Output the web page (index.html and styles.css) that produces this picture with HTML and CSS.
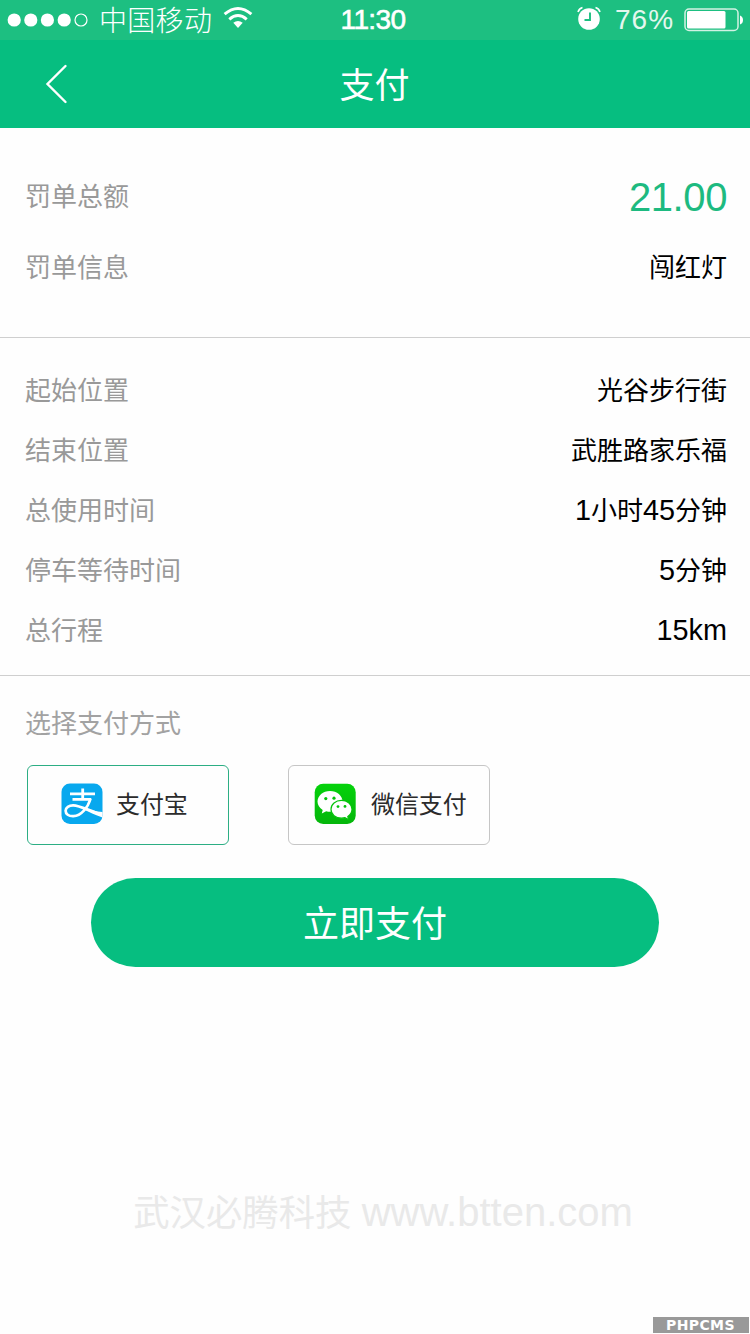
FILE: index.html
```html
<!DOCTYPE html>
<html lang="zh-CN">
<head>
<meta charset="utf-8">
<title>支付</title>
<link rel="stylesheet" href="styles.css">
</head>
<body>
<div class="screen">
  <header class="header">
    <div class="status">
      <div class="status-left">
        <svg class="signal" width="82" height="16" viewBox="0 0 82 16" fill="#fff">
          <circle cx="7.2" cy="8" r="6.6"/><circle cx="23.8" cy="8" r="6.6"/><circle cx="40.4" cy="8" r="6.6"/><circle cx="57.2" cy="8" r="6.6"/>
          <circle cx="74" cy="8" r="6" fill="none" stroke="#fff" stroke-width="1.2"/>
        </svg>
        <span class="carrier">中国移动</span>
        <svg class="wifi" width="30" height="24" viewBox="0 0 30 24" fill="none" stroke="#fff" stroke-width="3">
          <path d="M1.6 8.2Q15 -3.2 28.4 8.2M6.3 13.3Q15 5.8 23.7 13.3"/>
          <path d="M10.3 16.8Q15 13 19.7 16.8L15 21.9Z" fill="#fff" stroke="none"/>
        </svg>
      </div>
      <span class="clock">11:30</span>
      <div class="status-right">
        <svg class="alarm" width="24" height="24" viewBox="0 0 24 24">
          <circle cx="12" cy="13" r="10.8" fill="#fff"/>
          <path d="M1 6Q2 2.5 5.5 1.5M23 6Q22 2.5 18.5 1.5" fill="none" stroke="#fff" stroke-width="1.6"/>
          <path d="M13 6.5V14H7.5" fill="none" stroke="#1dbf81" stroke-width="1.9"/>
        </svg>
        <span class="percent">76%</span>
        <svg class="battery" width="60" height="24" viewBox="0 0 60 24">
          <rect x="1" y="1" width="53" height="21.5" rx="4" fill="none" stroke="#d4f2e4" stroke-width="1.5"/>
          <rect x="3" y="3" width="38.5" height="17.5" rx="1.5" fill="#fff"/>
          <path d="M56 7.5Q59 8.5 59 12T56 16.5Z" fill="#fff"/>
        </svg>
      </div>
    </div>
    <nav class="nav">
      <svg class="back" width="24" height="40" viewBox="0 0 24 40" fill="none" stroke="#fff" stroke-width="2.4" stroke-linecap="round"><path d="M20.5 2L2.5 20L20.5 38"/></svg>
      <h1 class="title">支付</h1>
    </nav>
  </header>

  <section class="section ticket">
    <div class="row"><span class="label">罚单总额</span><span class="amount">21.00</span></div>
    <div class="row"><span class="label">罚单信息</span><span class="value">闯红灯</span></div>
  </section>

  <section class="section trip">
    <div class="row"><span class="label">起始位置</span><span class="value">光谷步行街</span></div>
    <div class="row"><span class="label">结束位置</span><span class="value">武胜路家乐福</span></div>
    <div class="row"><span class="label">总使用时间</span><span class="value"><span class="latin">1</span>小时<span class="latin">45</span>分钟</span></div>
    <div class="row"><span class="label">停车等待时间</span><span class="value"><span class="latin">5</span>分钟</span></div>
    <div class="row"><span class="label">总行程</span><span class="value"><span class="latin">15km</span></span></div>
  </section>

  <section class="payment">
    <h2 class="label heading">选择支付方式</h2>
    <div class="methods">
      <div class="method selected">
        <svg class="logo" width="42" height="42" viewBox="0 0 42 42">
          <rect x=".5" y=".5" width="41" height="40.5" rx="8.5" fill="#08a8ee"/>
          <path d="M9 10.8H34M21.7 5.5V17M11.5 16.4H30" fill="none" stroke="#fff" stroke-width="2.8"/>
          <path d="M29.6 15.5C27 24.5 20 33 12.5 33.2C7.5 33.4 4.6 31 4.6 27.8C4.6 24.5 8 22.2 12.3 22.3C19 22.5 27 27.3 41 31.8" fill="none" stroke="#fff" stroke-width="2.7"/>
          <path d="M23 24.2C29 27 35 28.3 41.5 29V34.5C34 32 28 29 22 26Z" fill="#fff"/>
        </svg>
        <span class="method-name">支付宝</span>
      </div>
      <div class="method wechat">
        <svg class="logo" width="42" height="42" viewBox="0 0 42 42">
          <defs><linearGradient id="green" x1="0" y1="0" x2="0" y2="1"><stop offset="0" stop-color="#04d20b"/><stop offset="1" stop-color="#05b60b"/></linearGradient></defs>
          <rect x=".7" y=".7" width="41" height="40.3" rx="8.5" fill="url(#green)"/>
          <path d="M16 8C9 8 3.5 12.7 3.5 18.5C3.5 22 5.5 25 8.7 27L7.8 30.5L12.2 28.2Q14 28.8 16 28.8C23 28.8 28.5 24.3 28.5 18.5S23 8 16 8Z" fill="#fff"/>
          <path d="M27.5 17.4C21.5 17.4 17 21.3 17 26.3S21.5 35.2 27.5 35.2Q29.3 35.2 31 34.7L34.6 36.7L33.8 33.5C36.5 31.8 38 29.2 38 26.3C38 21.3 33.5 17.4 27.5 17.4Z" fill="#fff" stroke="#05c30b" stroke-width="1.2"/>
          <g fill="#05c30b"><circle cx="11.8" cy="15.6" r="1.6"/><circle cx="20" cy="15.2" r="1.6"/><circle cx="24" cy="23.6" r="1.4"/><circle cx="31" cy="23.4" r="1.4"/></g>
        </svg>
        <span class="method-name">微信支付</span>
      </div>
    </div>
    <button class="submit" type="button">立即支付</button>
  </section>

  <footer class="footer">
    <p class="company">武汉必腾科技 <span class="site">www.btten.com</span></p>
    <span class="badge">PHPCMS</span>
  </footer>
</div>
</body>
</html>
```
FILE: styles.css
```css
* { box-sizing: border-box; }
body { margin: 0; background: #fefefe; font-family: "Liberation Sans", "Noto Sans CJK SC", sans-serif; }
h1, h2, p { margin: 0; font-weight: 400; }
svg { display: block; flex: none; }
.screen { width: 750px; height: 1334px; display: flex; flex-direction: column; overflow: hidden; }

.header { height: 128px; background: #06be80; color: #fff; }
.status { height: 40px; background: #1dbf81; display: grid; grid-template-columns: 1fr auto 1fr; align-items: center; }
.status-left, .status-right { display: flex; align-items: center; height: 40px; }
.status-left { padding-left: 7px; }
.carrier { margin: 0 0 2px 10px; width: 114px; font-size: 28px; line-height: 38px; font-family: "Noto Sans CJK SC", sans-serif; font-weight: 300; letter-spacing: .3px; }
.wifi { margin: 0 0 4px 10px; }
.clock { font-size: 28px; line-height: 40px; letter-spacing: -.6px; padding-right: 4px; -webkit-text-stroke: .6px #fff; }
.status-right { justify-content: flex-end; padding-right: 6px; }
.alarm { margin-bottom: 4px; }
.percent { margin-left: 14px; width: 60px; font-size: 28px; line-height: 40px; letter-spacing: 1px; color: #e4f7ee; }
.battery { margin-left: 9px; }
.nav { height: 88px; padding: 0 45px; display: grid; grid-template-columns: 24px 1fr 24px; align-items: center; }
.title { font-size: 35px; line-height: 50px; text-align: center; padding: 3px 1px 0 0; }

.section { border-bottom: 1px solid #cfcfcf; padding: 0 23px 0 25px; flex: none; }
.row { display: flex; justify-content: space-between; align-items: center; }
.label { font-size: 26px; line-height: 40px; color: #999; }
.value { font-size: 26px; line-height: 40px; color: #000; }
.latin { font-size: 28.8px; line-height: 1; }
.amount { font-size: 40px; line-height: 50px; letter-spacing: -.4px; color: #1dba80; }
.ticket { height: 210px; padding-top: 33px; }
.ticket .row { height: 71px; }
.trip { height: 338px; padding-top: 23px; }
.trip .row { height: 60px; }

.payment { height: 291px; padding: 28px 27px 0; display: flex; flex-direction: column; flex: none; }
.heading { margin-left: -2px; color: #a2a2a2; }
.methods { display: flex; gap: 59px; margin-top: 21px; }
.method { width: 202px; height: 80px; display: flex; align-items: center; padding: 0 0 3px 33px; gap: 13px; border: 1px solid #c6c6c6; border-radius: 6px; font-size: 24px; line-height: 36px; color: #2b2b2b; white-space: nowrap; }
.method-name { padding-top: 2px; letter-spacing: -.1px; }
.method.selected { border-color: #2cae84; }
.method.wechat { padding-left: 25px; gap: 15px; }
.submit { width: 568px; height: 89px; margin: 33px auto 0; padding: 5px 0 0; border: 0; border-radius: 45px; background: #06be80; color: #fff; font: inherit; font-size: 36px; line-height: 50px; }

.footer { flex: 1; display: flex; flex-direction: column; justify-content: space-between; align-items: center; padding: 222px 1px 1px 0; }
.company { font-size: 36.4px; line-height: 50px; color: #e9e9e9; white-space: nowrap; padding-left: 17px; }
.site { font-size: 40px; line-height: 1; }
.badge { align-self: flex-end; width: 96px; height: 16px; background: #999; color: #fff; font: bold 14px/17px "DejaVu Sans", sans-serif; letter-spacing: .4px; padding-left: 13px; }
```
